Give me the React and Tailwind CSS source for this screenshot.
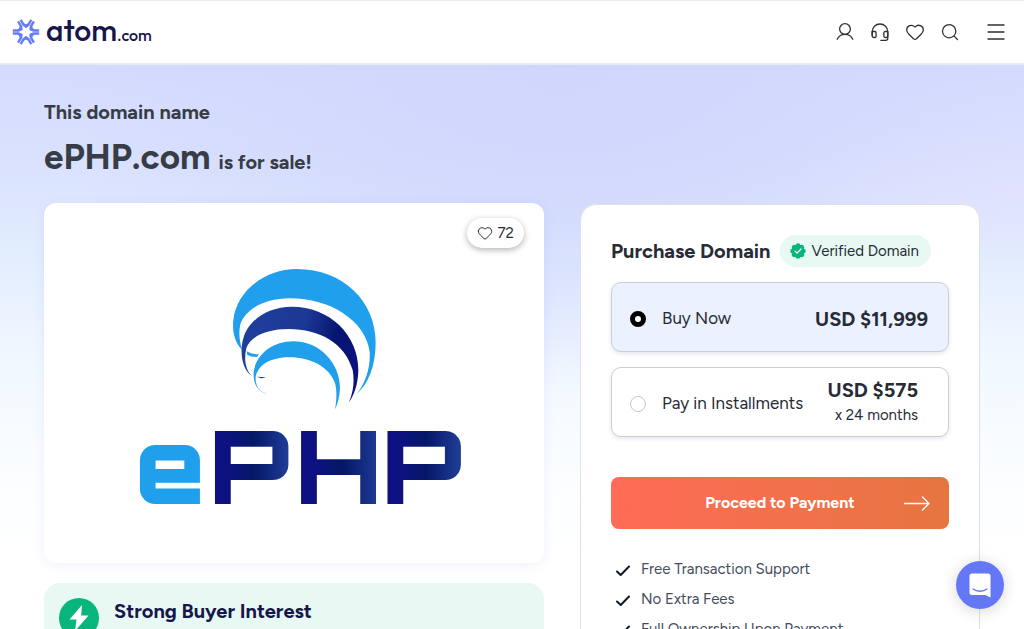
import { Heart, Menu, Search } from "lucide-react";

const OPTIONS_SHADOW = "shadow-[0_2px_4px_rgba(40,50,90,0.12)]";

function AtomMark() {
  return (
    <svg viewBox="-14 -14 28 28" className="size-7" fill="#647cf6" aria-hidden="true">
      {[0, 60, 120, 180, 240, 300].map((angle) => (
        <path
          key={angle}
          transform={`rotate(${angle})`}
          d="M6.300 -11.600 L4.200 -12.800 L2.100 -8.900 Q0 -6.800 -2.100 -8.900 L-4.200 -12.800 L-6.300 -11.600 L-3.400 -6.400 L0 -3.800 L3.400 -6.400 Z"
        />
      ))}
    </svg>
  );
}

function UserIcon() {
  return (
    <svg viewBox="0 0 20 20" className="size-5" fill="none" stroke="currentColor" strokeWidth="1.3" strokeLinecap="round" aria-hidden="true">
      <circle cx="10" cy="7" r="5.4" />
      <path d="M2.2 17.2C3.8 14 6.5 12.4 10 12.4s6.2 1.6 7.8 4.8" />
    </svg>
  );
}

function HeadsetIcon() {
  return (
    <svg viewBox="0 0 20 20" className="size-5" fill="none" stroke="currentColor" strokeWidth="1.3" strokeLinecap="round" strokeLinejoin="round" aria-hidden="true">
      <path d="M2.200 13.500V9.800a7.800 7.800 0 0 1 15.600 0v6.500a2 2 0 0 1-2 2h-5" />
      <path d="M2.200 9.500h2.600a1.300 1.300 0 0 1 1.300 1.300v3.400a1.300 1.300 0 0 1-1.300 1.300H4a1.800 1.800 0 0 1-1.800-1.800ZM17.800 9.500h-2.600a1.300 1.300 0 0 0-1.300 1.300v3.400a1.300 1.300 0 0 0 1.300 1.300H16a1.800 1.800 0 0 0 1.800-1.800Z" />
    </svg>
  );
}

function DomainLogo() {
  return (
    <svg viewBox="-258 -156 1500 1080" className="w-full" role="img" aria-label="ePHP">
      <defs>
        <linearGradient id="arc" x1="340" y1="200" x2="685" y2="300" gradientUnits="userSpaceOnUse">
          <stop offset="0" stopColor="#1f3f9c" />
          <stop offset="0.5" stopColor="#1d3795" />
          <stop offset="0.78" stopColor="#04166f" />
          <stop offset="1" stopColor="#0d117d" />
        </linearGradient>
        <linearGradient id="word">
          <stop offset="0" stopColor="#0f1184" />
          <stop offset="0.25" stopColor="#0d1280" />
          <stop offset="0.55" stopColor="#051768" />
          <stop offset="1" stopColor="#213f99" />
        </linearGradient>
      </defs>
      <g fill="#1f9fec">
        <path d="M336 284 C316 266 306 232 310 195 C320 108 405 42 500 42 C640 42 737 140 737 262 C737 335 715 385 680 418 C708 380 722 335 719 290 C706 196 600 130 480 130 C400 130 345 165 331 208 C325 235 329 260 336 284Z" />
        <path d="M350 289 Q366 298 387 298 L381 306 Q364 306 352 300Z" />
        <path d="M413 416 C385 412 369 390 371 350 C380 295 430 259 490 259 C570 259 630 325 630 400 C629 425 623 447 615 463 C620 435 621 410 616 388 C600 335 540 307 480 307 C420 307 385 330 377 365 C375 395 390 412 413 416Z" />
      </g>
      <path fill="url(#arc)" d="M366 363 C336 345 328 290 340 250 C355 195 415 155 485 155 C600 155 685 240 685 345 C684 390 672 420 657 442 C672 405 673 375 668 345 C645 265 570 222 475 222 C410 222 360 245 349 280 C341 315 347 345 366 363Z" />
      <path fill="#10306c" d="M380 365 L408 367 L395 370Z" />
      <g fontFamily="Orbitron, Michroma, Audiowide, 'DejaVu Sans', sans-serif" fontWeight="900" fontSize="306" fill="url(#word)">
        <text x="14" y="746" fill="#1f9fec">e</text>
        <text x="238" y="746">P</text>
        <text x="496" y="746">H</text>
        <text x="755" y="746">P</text>
      </g>
    </svg>
  );
}

function VerifiedIcon() {
  return (
    <svg viewBox="-8 -8 16 16" className="size-4" aria-hidden="true">
      <g fill="#08b57d">
        <circle r="6.6" />
        {[0, 45, 90, 135, 180, 225, 270, 315].map((a) => (
          <circle key={a} r="2.3" cx="0" cy="-5.5" transform={`rotate(${a})`} />
        ))}
      </g>
      <path d="M-2.900 0.200 L-1 2.200 L3 -2" fill="none" stroke="#fff" strokeWidth="1.200" strokeLinecap="round" strokeLinejoin="round" />
    </svg>
  );
}

function ArrowIcon() {
  return (
    <svg viewBox="0 0 28 16" className="h-4 w-7" fill="none" stroke="currentColor" strokeWidth="1.400" strokeLinecap="round" strokeLinejoin="round" aria-hidden="true">
      <path d="M1.500 8.500H26M19.500 2 26 8.500l-6.500 6.500" />
    </svg>
  );
}

function CheckIcon() {
  return (
    <svg viewBox="0 0 16 14" className="h-3.5 w-4" fill="none" stroke="#111827" strokeWidth="2" strokeLinecap="round" strokeLinejoin="round" aria-hidden="true">
      <path d="M2 9.500 5.700 13 14 4.500" />
    </svg>
  );
}

function Header() {
  const links = [
    ["Account", <UserIcon />],
    ["Support", <HeadsetIcon />],
    ["Favorites", <Heart size={20} strokeWidth={1.5} />],
    ["Search", <Search size={20} strokeWidth={1.5} />],
  ];
  return (
    <header className="flex h-[65px] items-center justify-between border-t border-b-2 border-t-[#e9eaec] border-b-[#e6ebf1] bg-white pr-4 pl-3">
      <a href="#" className="flex items-center gap-1.5 text-[#18154a]">
        <AtomMark />
        <span className="flex items-baseline pb-1 font-['Outfit','Urbanist','Figtree','Lato',sans-serif] leading-none">
          <span className="text-[30px] font-medium">atom</span>
          <span className="text-[16px] font-medium">.com</span>
        </span>
      </a>
      <nav className="flex items-center gap-[15px] text-[#2d3038]">
        {links.map(([name, icon]) => (
          <a key={name} href="#" aria-label={name}>{icon}</a>
        ))}
        <button type="button" aria-label="Menu" className="ml-[9px]">
          <Menu size={24} strokeWidth={1.3} />
        </button>
      </nav>
    </header>
  );
}

function Option({ id, label, checked, children }) {
  return (
    <label
      htmlFor={id}
      className={`flex h-[70px] items-center rounded-[10px] border border-[#c9ced9] px-4.5 pt-[3px] ${OPTIONS_SHADOW} ${checked ? "bg-[#ebf1fe]" : "bg-white"}`}
    >
      <input
        id={id}
        type="radio"
        name="plan"
        defaultChecked={checked}
        className="size-4 appearance-none rounded-full border border-[#c4c6cb] bg-white checked:border-5 checked:border-black"
      />
      <span className="ml-4 grow text-[17px] whitespace-nowrap">{label}</span>
      {children}
    </label>
  );
}

export default function App() {
  const benefits = ["Free Transaction Support", "No Extra Fees", "Full Ownership Upon Payment"];
  return (
    <div className="h-screen overflow-hidden bg-white font-['Figtree','Lato',sans-serif] text-[#272b35]">
      <Header />
      <main className="h-full bg-[radial-gradient(ellipse_240px_80px_at_100%_130px,#e4e0fe99_0%,#e4e0fe00_100%),radial-gradient(ellipse_520px_330px_at_55%_0px,#d0d6fd_0%,#d1d8fdcc_40%,#d4dbfe00_100%),linear-gradient(to_bottom,#d5dbfe_0px,#d9e1fe_90px,#e2edfe_190px,#f1f8ff_300px,#fafdff_400px,#ffffff_490px)] px-11 pt-[31px]">
        <h1 className="font-bold text-[#373c46]">
          <span className="block text-[20px] leading-8">This domain name</span>
          <span className="mt-1 flex items-baseline gap-2">
            <span className="text-[35px] leading-[50px]">ePHP.com</span>
            <span className="text-[20px]">is for sale!</span>
          </span>
        </h1>
        <div className="mt-[21px] grid grid-cols-[5fr_4fr] gap-9">
          <div className="flex flex-col gap-5">
            <section className="relative rounded-xl bg-white shadow-[0_2px_12px_rgba(100,110,240,0.1)]">
              <DomainLogo />
              <button type="button" className="absolute top-[15px] right-5 flex h-[30px] items-center gap-[5px] rounded-full bg-white px-2.5 text-[15px] shadow-[0_2px_6px_rgba(0,0,0,0.3)]">
                <Heart size={16} strokeWidth={1.5} />
                72
              </button>
            </section>
            <section className="flex h-28 gap-[15px] rounded-2xl bg-[#e8f8f3] p-[15px]">
              <svg viewBox="0 0 40 40" className="size-10 shrink-0" aria-hidden="true">
                <circle cx="20" cy="20" r="20" fill="#08b57d" />
                <path d="M23 7 10.500 21.500h7L16 33 29.500 17.500h-7.300Z" fill="#fff" />
              </svg>
              <h2 className="text-[20px] leading-[26px] font-bold text-[#15164a]">Strong Buyer Interest</h2>
            </section>
          </div>
          <section className="mt-px rounded-2xl border border-[#dfe1ea] bg-white px-[30px] pt-[30px] pb-8">
            <div className="flex items-center gap-2.5">
              <h2 className="text-[20px] font-bold whitespace-nowrap">Purchase Domain</h2>
              <span className="flex h-8 items-center gap-[5px] rounded-full bg-[#e8f8f3] pr-3 pl-2.5 text-[15px] whitespace-nowrap">
                <VerifiedIcon />
                Verified Domain
              </span>
            </div>
            <form className="mt-[15px] flex flex-col gap-[15px]">
              <Option id="buy" label="Buy Now" checked>
                <span className="mr-0.5 text-[20px] font-bold">USD $11,999</span>
              </Option>
              <Option id="installments" label="Pay in Installments">
                <span className="mr-3 pb-1 text-right whitespace-nowrap">
                  <span className="block text-[20px] leading-[26px] font-bold">USD $575</span>
                  <span className="block text-[15px] leading-6">x 24 months</span>
                </span>
              </Option>
              <button type="button" className="mt-[25px] grid h-[52px] grid-cols-[1fr_auto_1fr] items-center rounded-lg bg-linear-to-r from-[#ff6b57] to-[#e67540] px-4.5 text-[16px] font-bold text-white">
                <span className="col-start-2">Proceed to Payment</span>
                <span className="justify-self-end"><ArrowIcon /></span>
              </button>
            </form>
            <ul className="mt-[25px] text-[15px] leading-[30px] text-[#454c5e]">
              {benefits.map((text) => (
                <li key={text} className="flex items-center gap-2.5 pl-1">
                  <CheckIcon />
                  {text}
                </li>
              ))}
            </ul>
          </section>
        </div>
      </main>
      <button type="button" aria-label="Open chat" className="fixed right-5 bottom-5 grid size-12 place-items-center rounded-full bg-[#6478f7] shadow-[0_2px_16px_rgba(0,0,0,0.16)]">
        <svg viewBox="0 0 24 26" className="h-[26px] w-6" aria-hidden="true">
          <path d="M4 1.500h16a2.500 2.500 0 0 1 2.500 2.500v21.500L17.500 23H4a2.500 2.500 0 0 1-2.500-2.500V4A2.500 2.500 0 0 1 4 1.500Z" fill="#fff" />
          <path d="M5 17c4 3 10 3 14 0" fill="none" stroke="#6478f7" strokeWidth="1.300" strokeLinecap="round" />
        </svg>
      </button>
    </div>
  );
}
